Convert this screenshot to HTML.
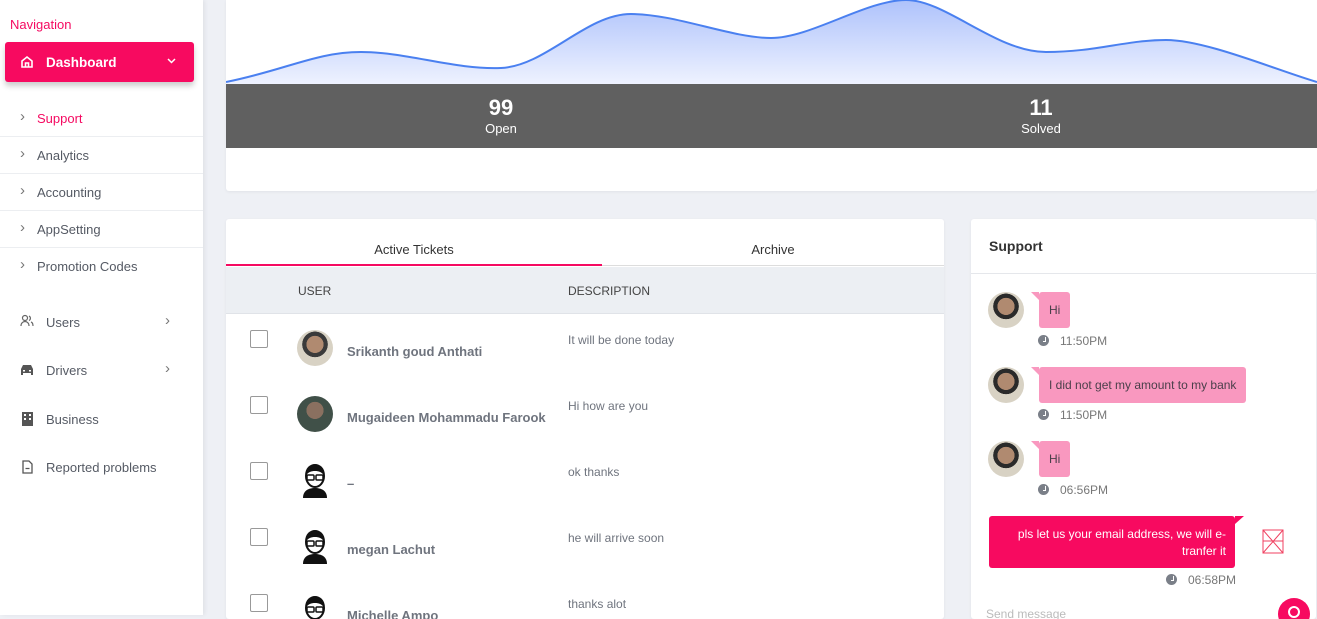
<!DOCTYPE html>
<html><head><style>
*{box-sizing:border-box;margin:0;padding:0}
body{width:1317px;height:615px;overflow:hidden;background:#eef0f5;font-family:"Liberation Sans",sans-serif;position:relative;color:#4a4f5a}
.sb{position:absolute;left:0;top:0;width:203px;height:615px;background:#fff;box-shadow:2px 0 4px rgba(0,0,0,.06)}
.nav{position:absolute;left:10px;top:17px;font-size:13px;color:#f50a61}
.dash{position:absolute;left:5px;top:42px;width:189px;height:40px;background:#f70a60;border-radius:3px;box-shadow:0 4px 6px rgba(0,0,0,.2);color:#fff;font-size:13.5px;font-weight:bold;padding:13px 0 0 41px}
.sub{position:absolute;left:0;width:203px;height:37px;border-bottom:1px solid #eceef1;font-size:13px;color:#555a64;padding:11px 0 0 37px}
.sub:before{content:"›";position:absolute;left:20px;top:8px;font-size:15px;color:#777}
.mi{position:absolute;left:46px;font-size:13px;color:#555a64}
.card{position:absolute;background:#fff;border-radius:3px;box-shadow:0 1px 3px rgba(0,0,0,.06)}
.row{position:absolute;left:0;width:718px;height:66px}
.cb{position:absolute;left:24px;top:15px;width:18px;height:18px;border:1px solid #999;border-radius:2px;background:#fff}
.av{position:absolute;left:71px;top:15px;width:36px;height:36px;border-radius:50%;background:radial-gradient(circle at 50% 40%,#b08a70 0 30%,#3a3a3a 31% 45%,#d8d2c4 46%)}
.cart{position:absolute;left:71px;top:15px}
.nm{position:absolute;left:121px;top:29px;font-size:13px;font-weight:bold;color:#6f747e}
.ds{position:absolute;left:342px;top:18px;font-size:12px;color:#6f747e}
.cav{position:absolute;left:17px;width:36px;height:36px;border-radius:50%;background:radial-gradient(circle at 50% 40%,#b08a70 0 30%,#2a2a2a 31% 45%,#d8d2c4 46%)}
.bub{position:absolute;background:#f998bf;border-radius:3px;font-size:12px;color:#4a3f4a;padding:11px 10px}
.bub:before{content:"";position:absolute;left:-8px;top:0;border-top:8px solid #f998bf;border-left:8px solid transparent}
.tm{position:absolute;font-size:12px;color:#777}
.tm:before{content:"";position:absolute;left:-22px;top:1px;width:11px;height:11px;border-radius:50%;background:#7a7f88}
.tm:after{content:"";position:absolute;left:-17px;top:3px;width:2px;height:4px;border-right:1.5px solid #fff;border-bottom:1.5px solid #fff}
</style></head><body>
<div class="sb">
<div class="nav">Navigation</div>
<div class="dash"><svg style="position:absolute;left:15px;top:13px" width="14" height="14" viewBox="0 0 14 14" fill="none" stroke="#fff" stroke-width="1.6"><path d="M2 6L7 2l5 4v6H2z M5.5 12V8h3v4"/></svg>Dashboard<svg style="position:absolute;right:18px;top:16px" width="9" height="6" viewBox="0 0 9 6" fill="none" stroke="#fff" stroke-width="1.5"><path d="M1 1l3.5 3.5L8 1"/></svg></div>
<div class="sub" style="top:100px;color:#f50a61">Support</div>
<div class="sub" style="top:137px">Analytics</div>
<div class="sub" style="top:174px">Accounting</div>
<div class="sub" style="top:211px">AppSetting</div>
<div class="sub" style="top:248px;border:none">Promotion Codes</div>
<div class="mi" style="top:315px">Users</div><div class="mi" style="top:363px">Drivers</div><div class="mi" style="top:412px">Business</div><div class="mi" style="top:460px">Reported problems</div>
<span style="position:absolute;left:165px;top:312px;color:#777;font-size:15px">›</span><span style="position:absolute;left:165px;top:360px;color:#777;font-size:15px">›</span>
<svg style="position:absolute;left:20px;top:314px" width="14" height="14" viewBox="0 0 14 14" fill="none" stroke="#666" stroke-width="1.2"><circle cx="5" cy="4" r="2.5"/><path d="M1 12c0-3 2-4.5 4-4.5s4 1.5 4 4.5M9 2a2.5 2.5 0 010 4.5M11 8c1.5.5 2 2 2 4"/></svg>
<svg style="position:absolute;left:20px;top:364px" width="14" height="12" viewBox="0 0 14 12" fill="#555"><path d="M3 1h8l2 4v6h-2V9H3v2H1V5z"/><rect x="3" y="6" width="2" height="1.5" fill="#fff"/><rect x="9" y="6" width="2" height="1.5" fill="#fff"/></svg>
<svg style="position:absolute;left:22px;top:412px" width="11" height="14" viewBox="0 0 11 14" fill="#555"><rect width="11" height="14"/><rect x="2" y="2" width="2" height="2" fill="#fff"/><rect x="7" y="2" width="2" height="2" fill="#fff"/><rect x="2" y="6" width="2" height="2" fill="#fff"/><rect x="7" y="6" width="2" height="2" fill="#fff"/></svg>
<svg style="position:absolute;left:22px;top:460px" width="11" height="14" viewBox="0 0 11 14" fill="none" stroke="#555" stroke-width="1.3"><path d="M1 1h6l3 3v9H1z M3.5 8.5h4"/></svg>
</div>

<div class="card" style="left:226px;top:0;width:1091px;height:191px;border-radius:0 0 3px 3px">
<svg style="position:absolute;left:0;top:0" width="1091" height="84" viewBox="0 0 1091 84"><defs><linearGradient id="g" x1="0" y1="0" x2="0" y2="1"><stop offset="0" stop-color="#aec2fb"/><stop offset="1" stop-color="#eef2ff"/></linearGradient></defs>
<path d="M0 82C60 70 90 52 135 52S230 70 275 68S360 14 405 14S505 38 545 38S640 0 680 0S770 52 820 52S900 40 940 40S1050 70 1091 82V84H0z" fill="url(#g)"/>
<path d="M0 82C60 70 90 52 135 52S230 70 275 68S360 14 405 14S505 38 545 38S640 0 680 0S770 52 820 52S900 40 940 40S1050 70 1091 82" fill="none" stroke="#4a80f0" stroke-width="2"/></svg>
<div style="position:absolute;left:0;top:84px;width:1091px;height:64px;background:#606060;color:#fff;text-align:center">
<div style="position:absolute;left:225px;width:100px;top:11px;font-size:22px;font-weight:bold">99</div><div style="position:absolute;left:225px;width:100px;top:37px;font-size:13px">Open</div>
<div style="position:absolute;left:765px;width:100px;top:11px;font-size:22px;font-weight:bold">11</div><div style="position:absolute;left:765px;width:100px;top:37px;font-size:13px">Solved</div></div>
</div>

<div class="card" style="left:226px;top:219px;width:718px;height:400px;overflow:hidden">
<div style="position:absolute;left:0;top:23px;width:376px;text-align:center;font-size:13px;color:#333">Active Tickets</div>
<div style="position:absolute;left:376px;top:23px;width:342px;text-align:center;font-size:13px;color:#333">Archive</div>
<div style="position:absolute;left:0;top:46px;width:718px;height:1px;background:#ddd"></div>
<div style="position:absolute;left:0;top:45px;width:376px;height:2px;background:#f50a61"></div>
<div style="position:absolute;left:0;top:48px;width:718px;height:47px;background:#eceff3;border-bottom:1px solid #e0e3e8;font-size:12px;color:#444">
<span style="position:absolute;left:72px;top:17px">USER</span><span style="position:absolute;left:342px;top:17px">DESCRIPTION</span></div>
<div class="row" style="top:96px"><div class="cb"></div><div class="av"></div><div class="nm">Srikanth goud Anthati</div><div class="ds">It will be done today</div></div>
<div class="row" style="top:162px"><div class="cb"></div><div class="av" style="background:radial-gradient(circle at 50% 40%,#8a7060 0 30%,#405048 31%)"></div><div class="nm">Mugaideen Mohammadu Farook</div><div class="ds">Hi how are you</div></div>
<div class="row" style="top:228px"><div class="cb"></div><svg class="cart" width="36" height="36" viewBox="0 0 36 36"><path d="M6 36c0-7 5-10 12-10s12 3 12 10z" fill="#111"/><path d="M9 14c0-8 5-11 9-11s9 3 9 11c0 6-4 11-9 11s-9-5-9-11z" fill="#fff" stroke="#111" stroke-width="2"/><path d="M9 13c1-7 5-10 9-10s8 3 9 10c-3-3-5-4-9-4s-6 1-9 4z" fill="#111"/><rect x="10" y="13" width="7" height="5" rx="1" fill="none" stroke="#111" stroke-width="1.5"/><rect x="19" y="13" width="7" height="5" rx="1" fill="none" stroke="#111" stroke-width="1.5"/></svg><div class="nm">–</div><div class="ds">ok thanks</div></div>
<div class="row" style="top:294px"><div class="cb"></div><svg class="cart" width="36" height="36" viewBox="0 0 36 36"><path d="M6 36c0-7 5-10 12-10s12 3 12 10z" fill="#111"/><path d="M9 14c0-8 5-11 9-11s9 3 9 11c0 6-4 11-9 11s-9-5-9-11z" fill="#fff" stroke="#111" stroke-width="2"/><path d="M9 13c1-7 5-10 9-10s8 3 9 10c-3-3-5-4-9-4s-6 1-9 4z" fill="#111"/><rect x="10" y="13" width="7" height="5" rx="1" fill="none" stroke="#111" stroke-width="1.5"/><rect x="19" y="13" width="7" height="5" rx="1" fill="none" stroke="#111" stroke-width="1.5"/></svg><div class="nm">megan Lachut</div><div class="ds">he will arrive soon</div></div>
<div class="row" style="top:360px"><div class="cb"></div><svg class="cart" width="36" height="36" viewBox="0 0 36 36"><path d="M6 36c0-7 5-10 12-10s12 3 12 10z" fill="#111"/><path d="M9 14c0-8 5-11 9-11s9 3 9 11c0 6-4 11-9 11s-9-5-9-11z" fill="#fff" stroke="#111" stroke-width="2"/><path d="M9 13c1-7 5-10 9-10s8 3 9 10c-3-3-5-4-9-4s-6 1-9 4z" fill="#111"/><rect x="10" y="13" width="7" height="5" rx="1" fill="none" stroke="#111" stroke-width="1.5"/><rect x="19" y="13" width="7" height="5" rx="1" fill="none" stroke="#111" stroke-width="1.5"/></svg><div class="nm">Michelle Ampo</div><div class="ds">thanks alot</div></div>
</div>

<div class="card" style="left:971px;top:219px;width:345px;height:400px;overflow:hidden">
<div style="position:absolute;left:18px;top:19px;font-size:14px;font-weight:bold;color:#333">Support</div>
<div style="position:absolute;left:0;top:54px;width:345px;height:1px;background:#e5e7eb"></div>
<div class="cav" style="top:73px"></div><div class="bub" style="left:68px;top:73px">Hi</div><div class="tm" style="left:89px;top:115px">11:50PM</div>
<div class="cav" style="top:148px"></div><div class="bub" style="left:68px;top:148px">I did not get my amount to my bank</div><div class="tm" style="left:89px;top:189px">11:50PM</div>
<div class="cav" style="top:222px"></div><div class="bub" style="left:68px;top:222px">Hi</div><div class="tm" style="left:89px;top:264px">06:56PM</div>
<div style="position:absolute;left:18px;top:297px;width:246px;height:52px;background:#f70a60;border-radius:3px;color:#fff;font-size:12px;text-align:right;padding:10px 9px;line-height:17px">pls let us your email address, we will e-tranfer it</div>
<div style="position:absolute;left:264px;top:297px;border-top:8px solid #f70a60;border-right:9px solid transparent"></div>
<svg style="position:absolute;left:291px;top:310px" width="22" height="25" viewBox="0 0 22 25" fill="none" stroke="#f04060" stroke-width="1"><path d="M1 1h20v23H1zM1 1l20 23M21 1L1 24M1 12h20"/></svg>
<div class="tm" style="left:217px;top:354px">06:58PM</div>
<div style="position:absolute;left:15px;top:388px;font-size:12px;color:#bbb">Send message</div>
<div style="position:absolute;left:307px;top:379px;width:32px;height:32px;border-radius:50%;background:#f70a60"></div>
<div style="position:absolute;left:317px;top:387px;width:12px;height:12px;border-radius:50%;border:2px solid #fff"></div>
</div>
</body></html>
